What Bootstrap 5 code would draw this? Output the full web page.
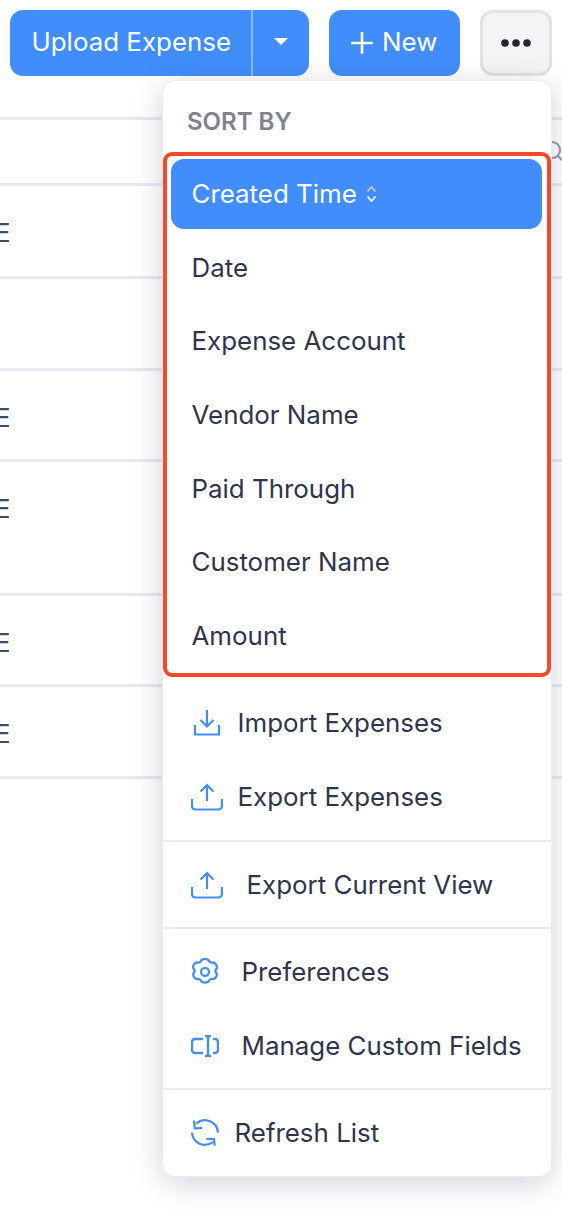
<!DOCTYPE html>
<html lang="en">
<head>
<meta charset="utf-8">
<title>Expenses</title>
<link href="https://cdn.jsdelivr.net/npm/bootstrap@5.3.0/dist/css/bootstrap.min.css" rel="stylesheet">
<style>
html,body{height:100%;overflow:hidden}
body{font-family:Inter,"Liberation Sans",sans-serif;background:#fff;color:#2f344d}
.page-wrap{width:562px;height:1226px;position:relative;overflow:hidden}
.tool-bar{padding:10px 10px 0;height:117px;gap:20px}
.tool-btn{height:66px;font-size:25.900px;border:0;background:#408dfb;color:#fff;display:flex;align-items:center;padding-bottom:1px!important;--bs-btn-hover-bg:#408dfb;--bs-btn-hover-color:#fff}
.upload-main{width:241px;padding:0 0 0 21.500px;border-radius:13px 0 0 13px!important;white-space:nowrap}
.upload-caret{width:58px;justify-content:center;padding:0;border-left:2px solid #8ab9fc!important;border-radius:0 13px 13px 0!important;margin-left:0!important}
.new-btn{width:131px;padding:0 0 0 22px;gap:9px;border-radius:13px}
.more-btn{width:72px;height:66px;background:#f4f4f6;border:3px solid #e2e2e4;border-radius:13px;padding:0;display:flex;align-items:center;justify-content:center;--bs-btn-hover-bg:#f4f4f6;--bs-btn-hover-border-color:#e2e2e4}
.caret-shape{display:block;width:0;height:0;border-left:7px solid transparent;border-right:7px solid transparent;border-top:7px solid #fff;margin-top:-3px}
.list-line{border-top:3px solid #e9e9f1;font-size:25.900px;color:#3f4c63;line-height:30px;padding-top:32px;overflow:hidden}
.list-line span{display:block;margin-left:-5px}
.h-head{height:66px;position:relative}
.h-a{height:93px}.h-b{height:92px}.h-c{height:91px}.h-d{height:134px}.h-e{height:91px}.h-f{height:92px}
.h-g{height:3px}
.search-peek{position:absolute;right:-4px;top:20px}
.action-menu{position:absolute;top:80px;left:161.500px;width:390px;height:1097px;margin:0;padding:0;border:1.500px solid #ececf3;border-radius:13px;box-shadow:0 6px 30px rgba(70,70,110,.24);background:#fff;overflow:hidden;--bs-dropdown-min-width:0}
.menu-title{padding:11px 0 0 24.500px;height:70.500px;display:flex;align-items:center;font-size:24px;font-weight:600;color:#80808f;margin:0;text-transform:uppercase;line-height:1}
.sort-box{border:4px solid #f4492a;border-radius:9px;padding:3.500px 5px 0 4px;height:525px;display:flex;flex-direction:column;gap:3.670px}
.menu-row{height:70px;display:flex;align-items:center;padding:0 0 0 21px;font-size:25.900px;line-height:30px;color:#2f344d;border-radius:13px;white-space:nowrap;flex:none}
.menu-row.active{background:#408dfb;color:#fff}
.sort-mark{margin-left:9px}
.menu-group{display:flex;flex-direction:column;gap:3.670px}
.menu-group .menu-row{padding-left:28px}
.g-a{padding:11px 0 8px;gap:4.500px}.g-b{padding:8px 0 7px}.g-c{padding:8px 0 7px}.g-d{padding:8px 0 0}
.menu-line{border:0;border-top:2px solid #e9ebf1;opacity:1;margin:0;flex:none}
.ico-box{width:32px;height:34px;flex:none;display:flex;justify-content:center;align-items:center}
.ico-start{justify-content:flex-start}
.t-a{margin-left:15px}.t-b{margin-left:24px}.t-c{margin-left:19px}.t-d{margin-left:12px}
</style>
</head>
<body>
<div class="page-wrap">
  <div class="tool-bar d-flex align-items-start">
    <div class="btn-group">
      <button type="button" class="btn tool-btn upload-main">Upload Expense</button>
      <button type="button" class="btn tool-btn upload-caret" aria-label="More upload options"><span class="caret-shape"></span></button>
    </div>
    <button type="button" class="btn tool-btn new-btn">
      <svg width="22" height="22" viewBox="0 0 22 22" aria-hidden="true"><path d="M11 1v20M1 11h20" stroke="#fff" stroke-width="2.600" stroke-linecap="round" fill="none"/></svg>
      New
    </button>
    <button type="button" class="btn more-btn" aria-label="More">
      <svg width="30" height="10" viewBox="0 0 30 10" aria-hidden="true"><circle cx="4" cy="5" r="3.800" fill="#22262f"/><circle cx="15" cy="5" r="3.800" fill="#22262f"/><circle cx="26" cy="5" r="3.800" fill="#22262f"/></svg>
    </button>
  </div>

  <div class="list-line h-head">
    <svg class="search-peek" width="24" height="24" viewBox="0 0 24 24" aria-hidden="true"><circle cx="10" cy="10" r="8" stroke="#9a9aaa" stroke-width="2.200" fill="none"/><path d="M16 16l6 6" stroke="#9a9aaa" stroke-width="2.200" fill="none"/></svg>
  </div>
  <div class="list-line h-a"><span>E</span></div>
  <div class="list-line h-b"></div>
  <div class="list-line h-c"><span>E</span></div>
  <div class="list-line h-d"><span>E</span></div>
  <div class="list-line h-e"><span>E</span></div>
  <div class="list-line h-f"><span>E</span></div>
  <div class="list-line h-g"></div>

  <div class="dropdown-menu show action-menu">
    <h6 class="menu-title">Sort by</h6>
    <div class="sort-box">
      <a class="menu-row active text-decoration-none" href="#">Created Time
        <svg class="sort-mark" width="11" height="18" viewBox="0 0 11 18" aria-hidden="true"><path d="M1.500 6.500L5.500 2l4 4.500" stroke="#c3c9d6" stroke-width="1.800" fill="none"/><path d="M1.500 11.500l4 4.500 4-4.500" stroke="#fff" stroke-width="1.800" fill="none"/></svg>
      </a>
      <a class="menu-row text-decoration-none" href="#">Date</a>
      <a class="menu-row text-decoration-none" href="#">Expense Account</a>
      <a class="menu-row text-decoration-none" href="#">Vendor Name</a>
      <a class="menu-row text-decoration-none" href="#">Paid Through</a>
      <a class="menu-row text-decoration-none" href="#">Customer Name</a>
      <a class="menu-row text-decoration-none" href="#">Amount</a>
    </div>
    <div class="menu-group g-a">
      <a class="menu-row text-decoration-none" href="#">
        <span class="ico-box"><svg width="28" height="28" viewBox="0 0 28 28" aria-hidden="true"><path d="M14 1v16M7.500 11l6.500 6.500 6.500-6.500M2 16v9.500h24V16" stroke="#408dfb" stroke-width="2.200" fill="none"/></svg></span>
        <span class="t-a">Import Expenses</span>
      </a>
      <a class="menu-row text-decoration-none" href="#">
        <span class="ico-box"><svg width="32" height="28" viewBox="0 0 32 28" aria-hidden="true"><path d="M16 2v16M9.500 8.500L16 2l6.500 6.500M1 16v7a3.500 3.500 0 0 0 3.500 3.500h23A3.500 3.500 0 0 0 31 23v-7" stroke="#408dfb" stroke-width="2.200" fill="none"/></svg></span>
        <span class="t-a">Export Expenses</span>
      </a>
    </div>
    <hr class="menu-line">
    <div class="menu-group g-b">
      <a class="menu-row text-decoration-none" href="#">
        <span class="ico-box"><svg width="32" height="28" viewBox="0 0 32 28" aria-hidden="true"><path d="M16 2v16M9.500 8.500L16 2l6.500 6.500M1 16v7a3.500 3.500 0 0 0 3.500 3.500h23A3.500 3.500 0 0 0 31 23v-7" stroke="#408dfb" stroke-width="2.200" fill="none"/></svg></span>
        <span class="t-b">Export Current View</span>
      </a>
    </div>
    <hr class="menu-line">
    <div class="menu-group g-c">
      <a class="menu-row text-decoration-none" href="#">
        <span class="ico-box ico-start"><svg width="28" height="28" viewBox="0 0 28 28" aria-hidden="true"><path d="M11 1.800c1.700-1 4.300-1 6 0 1 .7 1.300 2 2.400 2.500 1.100.5 2.300 0 3.400.4 1.900.7 3.300 3 3 5-.2 1.100-1.300 1.900-1.400 3.100-.1 1.100 1 1.900 1.300 3 .4 2-1 4.400-2.900 5.100-1.100.4-2.300-.1-3.400.4s-1.400 1.800-2.400 2.500c-1.700 1-4.300 1-6 0-1-.7-1.300-2-2.400-2.500s-2.300 0-3.400-.4c-1.900-.7-3.300-3.100-2.900-5.100.3-1.100 1.400-1.900 1.300-3-.1-1.200-1.200-2-1.400-3.100-.3-2 1.100-4.300 3-5 1.100-.4 2.300.1 3.400-.4 1.100-.5 1.400-1.800 2.400-2.500z" stroke="#408dfb" stroke-width="2.300" fill="none"/><circle cx="14" cy="13.800" r="4" stroke="#408dfb" stroke-width="2.300" fill="none"/></svg></span>
        <span class="t-c">Preferences</span>
      </a>
      <a class="menu-row text-decoration-none" href="#">
        <span class="ico-box ico-start"><svg width="28" height="22" viewBox="0 0 28 22" aria-hidden="true"><path d="M12 4H4a3 3 0 0 0-3 3v8a3 3 0 0 0 3 3h8M22 4h2a3 3 0 0 1 3 3v8a3 3 0 0 1-3 3h-2M17 1v20M14 1h6M14 21h6" stroke="#408dfb" stroke-width="2.400" fill="none"/></svg></span>
        <span class="t-c">Manage Custom Fields</span>
      </a>
    </div>
    <hr class="menu-line">
    <div class="menu-group g-d">
      <a class="menu-row text-decoration-none" href="#">
        <span class="ico-box ico-start"><svg width="28" height="28" viewBox="0 0 28 28" aria-hidden="true"><path d="M27 13.600A13 13 0 0 0 5.300 4.600M3 1.700l.7 7.600 7.300-.3M1 13.600A13 13 0 0 0 22 23M15.300 20h7.700l.7 6.700" stroke="#408dfb" stroke-width="2.200" fill="none"/></svg></span>
        <span class="t-d">Refresh List</span>
      </a>
    </div>
  </div>
</div>
<script src="https://cdn.jsdelivr.net/npm/bootstrap@5.3.0/dist/js/bootstrap.bundle.min.js"></script>
</body>
</html>
